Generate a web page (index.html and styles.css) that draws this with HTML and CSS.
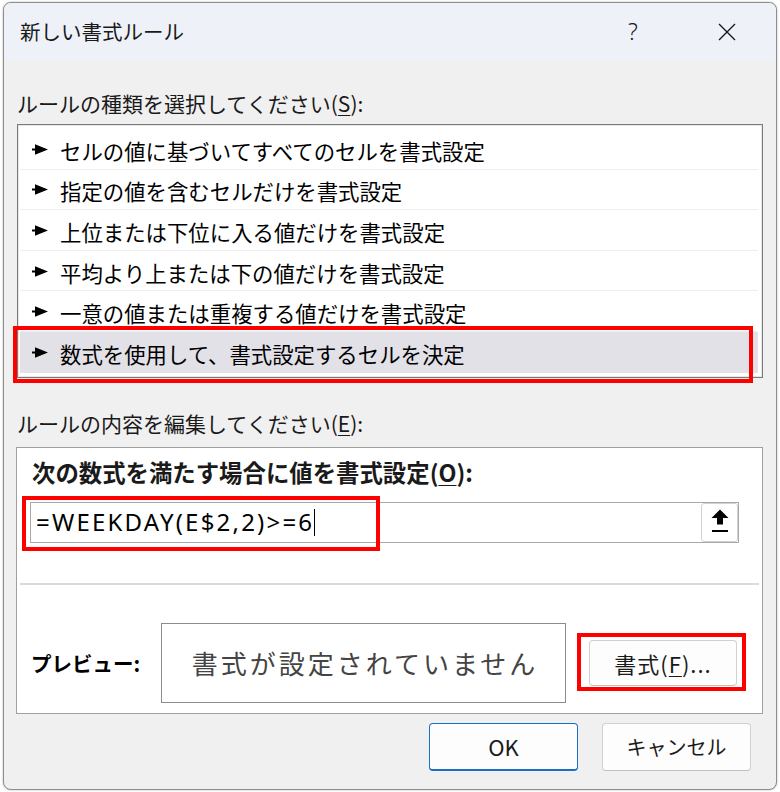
FILE: index.html
```html
<!DOCTYPE html>
<html lang="ja">
<head>
<meta charset="utf-8">
<title>新しい書式ルール</title>
<link rel="stylesheet" href="styles.css">
</head>
<body>
<div class="dialog">
  <div class="title-bar">
    <span class="title">新しい書式ルール</span>
    <span class="help">?</span>
    <span class="close">
      <svg width="18" height="18" viewBox="0 0 18 18"><path d="M1 1 L17 17 M17 1 L1 17" stroke="#1a1a1a" stroke-width="1.4" fill="none"/></svg>
    </span>
  </div>
  <div class="content">
    <div class="label">ルールの種類を選択してください(<u>S</u>):</div>
    <div class="list">
      <div class="row"><svg class="arrow" width="16" height="11" viewBox="0 0 16 11"><polygon points="0,4.5 3,4.5 3,0.3 16,5.5 3,10.7 3,6.5 0,6.5" fill="#000"/></svg><span>セルの値に基づいてすべてのセルを書式設定</span></div>
      <div class="row"><svg class="arrow" width="16" height="11" viewBox="0 0 16 11"><polygon points="0,4.5 3,4.5 3,0.3 16,5.5 3,10.7 3,6.5 0,6.5" fill="#000"/></svg><span>指定の値を含むセルだけを書式設定</span></div>
      <div class="row"><svg class="arrow" width="16" height="11" viewBox="0 0 16 11"><polygon points="0,4.5 3,4.5 3,0.3 16,5.5 3,10.7 3,6.5 0,6.5" fill="#000"/></svg><span>上位または下位に入る値だけを書式設定</span></div>
      <div class="row"><svg class="arrow" width="16" height="11" viewBox="0 0 16 11"><polygon points="0,4.5 3,4.5 3,0.3 16,5.5 3,10.7 3,6.5 0,6.5" fill="#000"/></svg><span>平均より上または下の値だけを書式設定</span></div>
      <div class="row"><svg class="arrow" width="16" height="11" viewBox="0 0 16 11"><polygon points="0,4.5 3,4.5 3,0.3 16,5.5 3,10.7 3,6.5 0,6.5" fill="#000"/></svg><span>一意の値または重複する値だけを書式設定</span></div>
      <div class="row selected"><svg class="arrow" width="16" height="11" viewBox="0 0 16 11"><polygon points="0,4.5 3,4.5 3,0.3 16,5.5 3,10.7 3,6.5 0,6.5" fill="#000"/></svg><span>数式を使用して、書式設定するセルを決定</span></div>
      <div class="mark mark-list"></div>
    </div>

    <div class="label label-edit">ルールの内容を編集してください(<u>E</u>):</div>
    <div class="group">
      <div class="group-label">次の数式を満たす場合に値を書式設定(<u>O</u>):</div>
      <div class="input">
        <span class="formula">=WEEKDAY(E$2,2)&gt;=6</span><span class="caret"></span>
        <span class="collapse-btn">
          <svg width="18" height="24" viewBox="0 0 18 24"><polygon points="9,0.5 17.5,9 12,9 12,15.5 6,15.5 6,9 0.5,9" fill="#000"/><rect x="1" y="21" width="16" height="2" fill="#000"/></svg>
        </span>
        <div class="mark mark-input"></div>
      </div>
      <div class="sep"></div>
      <div class="preview-row">
        <div class="preview-label">プレビュー:</div>
        <div class="preview-box">書式が設定されていません</div>
        <div class="btn btn-format">書式(<u>F</u>)...<div class="mark mark-format"></div></div>
      </div>
    </div>

    <div class="buttons">
      <div class="btn btn-main btn-ok">OK</div>
      <div class="btn btn-main btn-cancel">キャンセル</div>
    </div>
  </div>
</div>
</body>
</html>
```

FILE: styles.css
```css
* { box-sizing: border-box; }
html, body { margin: 0; padding: 0; }
body {
  width: 780px;
  height: 792px;
  overflow: hidden;
  background: #ffffff;
  padding: 2px 3px 0 3px;
  font-family: "Noto Sans CJK JP", "Noto Sans", sans-serif;
  color: #000;
}
.dialog {
  width: 774px;
  height: 788px;
  border: 1px solid #8e8e8e;
  border-radius: 8px;
  overflow: hidden;
  background: #f0f0f0;
  box-shadow: 0 0 2px rgba(0,0,0,0.35);
  display: flex;
  flex-direction: column;
}
.title-bar {
  height: 57px;
  flex: none;
  background: #eef2f8;
  display: flex;
  align-items: center;
  padding-left: 16px;
  padding-right: 29px;
}
.title {
  font-size: 20.5px;
  line-height: 1;
  color: #1a1a1a;
}
.help {
  margin-left: auto;
  width: 40px;
  text-align: center;
  font-family: "Noto Sans", sans-serif;
  font-weight: 300;
  font-size: 23px;
  line-height: 1;
  color: #1a1a1a;
}
.close {
  margin-left: 54px;
  width: 40px;
  display: flex;
  justify-content: center;
}
.content {
  padding: 0 13px;
  flex: 1;
  display: flex;
  flex-direction: column;
}
.label {
  margin-top: 28px;
  font-size: 21px;
  line-height: 30px;
  color: #1a1a1a;
  white-space: nowrap;
}
.label-edit { margin-top: 30px; }
u { text-underline-offset: 3px; text-decoration-thickness: 1px; }
.list {
  position: relative;
  margin-top: 6px;
  background: #fff;
  border: 1px solid #7a7a7a;
  box-shadow: inset 0 0 0 1px #e6e6e6;
  padding: 4px 4px 4.4px 2px;
}
.row {
  height: 40.6px;
  display: flex;
  align-items: center;
  padding-left: 12px;
  padding-top: 3px;
  border-bottom: 1px solid #efefef;
  font-size: 21.4px;
  white-space: nowrap;
}
.row.selected {
  border-bottom: none;
  background: #e1e1e7;
}
.arrow { flex: none; margin-right: 12px; margin-top: -2px; }
.mark {
  position: absolute;
  border: 4px solid #ff0000;
  pointer-events: none;
}
.mark-list { left: -5px; top: 201px; width: 740px; height: 57px; }
.group {
  margin-top: 9px;
  margin-left: -1px;
  background: #fff;
  border: 1px solid #a0a0a0;
  padding: 9px 0 10px 0;
}
.group-label {
  padding-left: 15px;
  font-size: 23.4px;
  font-weight: bold;
  line-height: 30px;
  white-space: nowrap;
  color: #1a1a1a;
}
.input {
  position: relative;
  margin: 15px 23px 0 13px;
  height: 41px;
  border: 1px solid #a8a8a8;
  display: flex;
  align-items: center;
  padding-left: 5px;
}
.formula {
  font-family: "Noto Sans", sans-serif;
  font-size: 24px;
  letter-spacing: 2.2px;
  line-height: 1;
  color: #000;
}
.caret {
  width: 1px;
  height: 27px;
  background: #000;
  margin-left: 0;
}
.collapse-btn {
  margin-left: auto;
  width: 37px;
  height: 39px;
  border: 1px solid #d2d2d2;
  border-radius: 3px;
  display: flex;
  justify-content: center;
  align-items: center;
  padding-bottom: 3px;
  background: #fff;
}
.mark-input { left: -9px; top: -7px; width: 358px; height: 55px; }
.sep {
  margin: 40px 3px 0 3px;
  height: 2px;
  background: #dadada;
}
.preview-row {
  margin-top: 38px;
  display: flex;
  align-items: center;
  padding-left: 14px;
}
.preview-label {
  width: 130px;
  flex: none;
  font-size: 20.5px;
  font-weight: bold;
  white-space: nowrap;
  color: #000;
}
.preview-box {
  width: 405px;
  height: 80px;
  flex: none;
  border: 1px solid #8c8c8c;
  display: flex;
  justify-content: center;
  align-items: center;
  font-size: 26px;
  letter-spacing: 3px;
  color: #444;
  padding-left: 3px;
  white-space: nowrap;
}
.btn {
  position: relative;
  display: flex;
  justify-content: center;
  align-items: center;
  background: #fdfdfd;
  border: 1px solid #d0d0d0;
  border-bottom-color: #c0c0c0;
  border-radius: 4px;
  font-size: 21px;
  color: #1a1a1a;
  white-space: nowrap;
}
.btn-format {
  margin-left: 23px;
  width: 148px;
  height: 46px;
  font-size: 22px;
  letter-spacing: 1px;
}
.mark-format { left: -13px; top: -8px; width: 169px; height: 58px; }
.buttons {
  margin-top: 9px;
  display: flex;
  justify-content: flex-end;
  gap: 24px;
  padding-right: 12px;
}
.btn-main {
  width: 149px;
  height: 48px;
}
.btn-ok {
  border: 1px solid #1a6fc4;
  border-bottom: 2px solid #1a6fc4;
  font-size: 22px;
}
.btn-cancel { font-size: 20px; }
```
